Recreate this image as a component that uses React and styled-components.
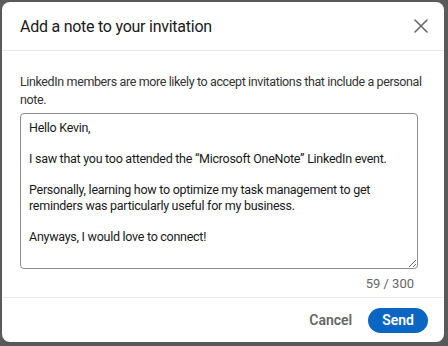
import styled, { createGlobalStyle } from "styled-components";

const GlobalStyles = createGlobalStyle`
  * {
    box-sizing: border-box;
  }

  body {
    margin: 0;
    background-color: #5a5a5a;
    font-family: Roboto, "Liberation Sans", Arial, sans-serif;
  }
`;

const Dialog = styled.div`
  width: 442px;
  height: 340px;
  margin: 2px 0 0 2px;
  background-color: #ffffff;
  border-radius: 8px;
  display: flex;
  flex-direction: column;
  overflow: hidden;
`;

const Header = styled.header`
  height: 49px;
  flex-shrink: 0;
  display: flex;
  align-items: center;
  justify-content: space-between;
  padding: 0 11px 0 18px;
  border-bottom: 1px solid #e8e8e6;

  h2 {
    margin: 0;
    font-size: 16px;
    font-weight: 400;
    letter-spacing: -0.25px;
    color: #191919;
  }
`;

const CloseButton = styled.button`
  width: 24px;
  height: 24px;
  padding: 0;
  border: none;
  background: none;
  display: flex;
  align-items: center;
  justify-content: center;
  color: #666666;
`;

const Body = styled.section`
  flex: 1;
  padding: 22px 16px 0 18px;

  p {
    margin: 0 0 5px;
    font-size: 12.5px;
    letter-spacing: -0.38px;
    line-height: 17.5px;
    color: #333333;
  }
`;

const NoteBox = styled.textarea`
  display: block;
  width: 398px;
  height: 156px;
  margin: 0;
  padding: 6px 8px;
  border: 1px solid #8c8c8c;
  border-radius: 4px;
  font-family: Roboto, "Liberation Sans", Arial, sans-serif;
  font-size: 12.5px;
  letter-spacing: -0.27px;
  line-height: 15.5px;
  color: #191919;
  resize: vertical;
  outline: none;
`;

const Counter = styled.div`
  width: 398px;
  padding: 7px 4px 0 0;
  text-align: right;
  font-size: 13px;
  color: #666666;
`;

const Footer = styled.footer`
  height: 45px;
  flex-shrink: 0;
  display: flex;
  align-items: center;
  justify-content: flex-end;
  gap: 16px;
  padding: 0 16px;
  border-top: 1px solid #ebebeb;
`;

const Button = styled.button`
  height: 25px;
  border: none;
  border-radius: 13px;
  padding: ${(props) => (props.$primary ? "0 14px" : "0")};
  background-color: ${(props) => (props.$primary ? "#0a66c2" : "transparent")};
  color: ${(props) => (props.$primary ? "#ffffff" : "#666666")};
  font-family: Roboto, "Liberation Sans", Arial, sans-serif;
  font-size: 14px;
  font-weight: 600;
`;

const note = `Hello Kevin,

I saw that you too attended the \u201CMicrosoft OneNote\u201D LinkedIn event.

Personally, learning how to optimize my task management to get reminders was particularly useful for my business.

Anyways, I would love to connect!`;

function App() {
  return (
    <>
      <GlobalStyles />
      <Dialog>
        <Header>
          <h2>Add a note to your invitation</h2>
          <CloseButton aria-label="Dismiss">
            <svg width="14" height="14" viewBox="0 0 14 14">
              <path
                d="M1 1 L13 13 M13 1 L1 13"
                stroke="currentColor"
                strokeWidth="1.6"
                strokeLinecap="round"
              />
            </svg>
          </CloseButton>
        </Header>
        <Body>
          <p>
            LinkedIn members are more likely to accept invitations that include
            a personal note.
          </p>
          <NoteBox defaultValue={note} />
          <Counter>59 / 300</Counter>
        </Body>
        <Footer>
          <Button>Cancel</Button>
          <Button $primary>Send</Button>
        </Footer>
      </Dialog>
    </>
  );
}

export default App;
